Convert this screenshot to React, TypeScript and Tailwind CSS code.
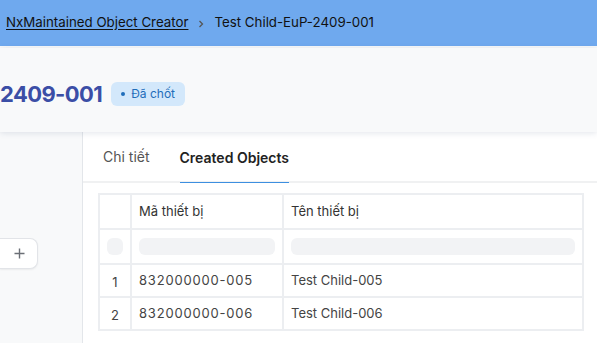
import React from "react";

export default function App() {
  const rows = [
    { n: "1", code: "832000000-005", name: "Test Child-005" },
    { n: "2", code: "832000000-006", name: "Test Child-006" },
  ];
  return (
    <div
      className="w-[597px] h-[343px] overflow-hidden bg-[#f8f9fa] flex flex-col"
      style={{ fontFamily: "Inter, 'Noto Sans', sans-serif" }}
    >
      {/* top bar */}
      <div className="h-[46px] shrink-0 bg-[#6fa9ee] flex items-center pl-[6px] text-[13.3px] text-[#111]">
        <span className="underline underline-offset-2">NxMaintained Object Creator</span>
        <svg className="mx-[8px] mt-[1px]" width="10" height="10" viewBox="0 0 10 10">
          <path d="M3.5 2 L6.5 5 L3.5 8" fill="none" stroke="#555" strokeWidth="1.3" />
        </svg>
        <span>Test Child-EuP-2409-001</span>
      </div>

      {/* header card */}
      <div className="h-[84px] shrink-0 mt-[2px] pt-[8px] bg-[#f8f9fa] shadow-[0_1px_6px_rgba(60,80,120,0.15)] flex items-center gap-[9px] relative z-10 overflow-hidden">
        <span className="text-[22px] font-bold text-[#3b4ea6] leading-none tracking-[-0.6px]">2409-001</span>
        <span className="h-[24px] px-[10px] rounded-md bg-[#d3e8fb] text-[#1f6dba] text-[12px] flex items-center gap-[6px]">
          <span className="w-[4px] h-[4px] rounded-full bg-[#1f6dba]" />
          Đã chốt
        </span>
      </div>

      {/* body */}
      <div className="flex flex-1 min-h-0">
        <div className="w-[83px] shrink-0 border-r border-[#e3e6ea] bg-[#f8f9fa] pt-[106px]">
          <div className="w-[38px] h-[31px] bg-white border border-l-0 border-[#e2e4e8] rounded-r-lg shadow-[0_1px_2px_rgba(0,0,0,0.06)] flex items-center justify-end pr-[12px]">
            <svg width="11" height="11" viewBox="0 0 11 11">
              <path d="M5.5 0.5 V10.5 M0.5 5.5 H10.5" stroke="#6b6f76" strokeWidth="1.4" />
            </svg>
          </div>
        </div>
        <div className="flex-1 bg-white flex flex-col">
          <div className="h-[51px] border-b-2 border-[#f0f1f2] flex items-end pl-[20px] gap-[30px] text-[14px]">
            <div className="pb-[14px] text-[#555]">Chi tiết</div>
            <div className="pb-[14px] font-semibold text-[#222] border-b-[1.5px] border-[#3d8fe0] mb-[-2px]">
              Created Objects
            </div>
          </div>
          <div className="pt-[10px] pl-[15px] pr-[13px]">
            <table className="w-full border-collapse text-[13px] text-[#333]">
              <tbody>
                <tr className="h-[35px]">
                  <td className="w-[32px] border-2 border-[#eceef1]" />
                  <td className="w-[152px] border-2 border-[#eceef1] pl-[7px]">Mã thiết bị</td>
                  <td className="border-2 border-[#eceef1] pl-[7px]">Tên thiết bị</td>
                </tr>
                <tr className="h-[35px]">
                  <td className="border-2 border-[#eceef1] px-[7px]">
                    <div className="h-[17px] rounded-md bg-[#f2f3f5]" />
                  </td>
                  <td className="border-2 border-[#eceef1] px-[7px]">
                    <div className="h-[17px] rounded-md bg-[#f2f3f5]" />
                  </td>
                  <td className="border-2 border-[#eceef1] px-[7px]">
                    <div className="h-[17px] rounded-md bg-[#f2f3f5]" />
                  </td>
                </tr>
                {rows.map((r) => (
                  <tr key={r.n} className="h-[33px] text-[#444]">
                    <td className="border-2 border-[#eceef1] text-center pt-[5px]">{r.n}</td>
                    <td className="border-2 border-[#eceef1] pl-[7px] tracking-[0.8px]">{r.code}</td>
                    <td className="border-2 border-[#eceef1] pl-[7px]">{r.name}</td>
                  </tr>
                ))}
              </tbody>
            </table>
          </div>
        </div>
      </div>
    </div>
  );
}
